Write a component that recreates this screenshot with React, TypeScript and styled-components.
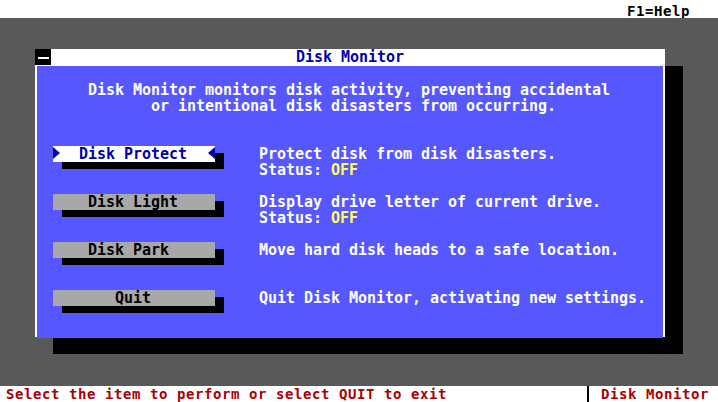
import React from 'react';
import styled, { createGlobalStyle } from 'styled-components';

const GlobalStyle = createGlobalStyle`
  html, body { margin: 0; padding: 0; background: #595959; }
  body { width: 718px; height: 402px; overflow: hidden; }
  * { box-sizing: border-box; }
`;

const COL = 9;

const Screen = styled.div`
  width: 718px;
  height: 402px;
  display: flex;
  flex-direction: column;
  font-family: 'DejaVu Sans Mono', 'Liberation Mono', monospace;
  font-weight: bold;
`;

const TopBar = styled.header`
  height: 18px;
  flex: none;
  background: #fff;
  color: #000;
  display: flex;
  justify-content: flex-end;
  padding: 3px 28px 0 0;
  font-size: 14px;
  letter-spacing: 0.57px;
  line-height: 16px;
`;

const Desktop = styled.main`
  flex: 1;
  background: #595959;
  padding: 31px 0 0 35px;
`;

const Dialog = styled.section`
  width: 630px;
  height: 288px;
  background: #fff;
  display: flex;
  flex-direction: column;
  box-shadow: 18px 17px 0 #000;
`;

const TitleBar = styled.div`
  height: 17px;
  flex: none;
  display: flex;
  align-items: flex-start;
`;

const CloseBox = styled.div`
  width: 16px;
  height: 16px;
  background: #000;
  flex: none;
  &::after {
    content: '';
    display: block;
    margin: 8px 0 0 3px;
    width: 11px;
    height: 2px;
    background: #fff;
  }
`;

const Title = styled.h1`
  flex: 1;
  margin: 0 16px 0 0;
  text-align: center;
  color: #0000aa;
  font-size: 15px;
  font-weight: bold;
  line-height: 16px;
  letter-spacing: -0.03px;
`;

const Body = styled.div`
  flex: 1;
  margin: 0 2px 2px;
  background: #5757ff;
  color: #fff;
  padding: 16px 0 0 16px;
  font-size: 15px;
  line-height: 16px;
  letter-spacing: -0.03px;
`;

const Intro = styled.div`
  margin-bottom: 32px;
`;

const IntroLine = styled.div<{ $indent: number }>`
  padding-left: ${(p) => p.$indent * COL - 1}px;
  white-space: pre;
`;

const List = styled.div`
  display: flex;
  flex-direction: column;
`;

const Item = styled.div`
  height: 48px;
  display: grid;
  grid-template-columns: 162px 1fr;
  column-gap: 44px;
  align-items: start;
`;

const Button = styled.div<{ $selected?: boolean; $pad: number }>`
  position: relative;
  height: 16px;
  padding-left: ${(p) => p.$pad * COL - 1}px;
  white-space: pre;
  background: ${(p) => (p.$selected ? '#fff' : '#a8a8a8')};
  color: ${(p) => (p.$selected ? '#0000aa' : '#000')};
  box-shadow: 9px 7px 0 #000;
  ${(p) =>
    p.$selected &&
    `
    &::before, &::after {
      content: '';
      position: absolute;
      top: 1px;
      width: 0;
      height: 0;
      border-top: 6.5px solid transparent;
      border-bottom: 6.5px solid transparent;
    }
    &::before { left: 0; border-left: 7px solid #0000aa; }
    &::after { right: 0; border-right: 7px solid #0000aa; }
  `}
`;

const Info = styled.div`
  white-space: pre;
`;

const InfoLine = styled.div`
  height: 16px;
`;

const Off = styled.span`
  color: #ffff55;
`;

const StatusBar = styled.footer`
  height: 16px;
  flex: none;
  background: #fff;
  color: #aa0000;
  display: flex;
  align-items: stretch;
  font-size: 14px;
  letter-spacing: 0.57px;
  line-height: 16px;
`;

const Hint = styled.span`
  flex: 1;
  padding-left: 6px;
  white-space: pre;
`;

const Divider = styled.span`
  width: 2px;
  background: #000;
  margin-right: 12px;
`;

const AppName = styled.span`
  margin-right: 9px;
  white-space: pre;
`;

type Entry = { label: string; text: string; status?: string; selected?: boolean };

const entries: Entry[] = [
  { label: 'Disk Protect', text: 'Protect disk from disk disasters.', status: 'OFF', selected: true },
  { label: 'Disk Light', text: 'Display drive letter of current drive.', status: 'OFF' },
  { label: 'Disk Park', text: 'Move hard disk heads to a safe location.' },
  { label: 'Quit', text: 'Quit Disk Monitor, activating new settings.' },
];

export default function App() {
  return (
    <>
      <GlobalStyle />
      <Screen>
        <TopBar>F1=Help</TopBar>
        <Desktop>
          <Dialog>
            <TitleBar>
              <CloseBox />
              <Title>Disk Monitor</Title>
            </TitleBar>
            <Body>
              <Intro>
                <IntroLine $indent={4}>Disk Monitor monitors disk activity, preventing accidental</IntroLine>
                <IntroLine $indent={11}>or intentional disk disasters from occurring.</IntroLine>
              </Intro>
              <List>
                {entries.map((e) => (
                  <Item key={e.label}>
                    <Button $selected={e.selected} $pad={Math.floor((18 - e.label.length) / 2)}>
                      {e.label}
                    </Button>
                    <Info>
                      <InfoLine>{e.text}</InfoLine>
                      {e.status && (
                        <InfoLine>
                          Status: <Off>{e.status}</Off>
                        </InfoLine>
                      )}
                    </Info>
                  </Item>
                ))}
              </List>
            </Body>
          </Dialog>
        </Desktop>
        <StatusBar>
          <Hint>Select the item to perform or select QUIT to exit</Hint>
          <Divider />
          <AppName>Disk Monitor</AppName>
        </StatusBar>
      </Screen>
    </>
  );
}
